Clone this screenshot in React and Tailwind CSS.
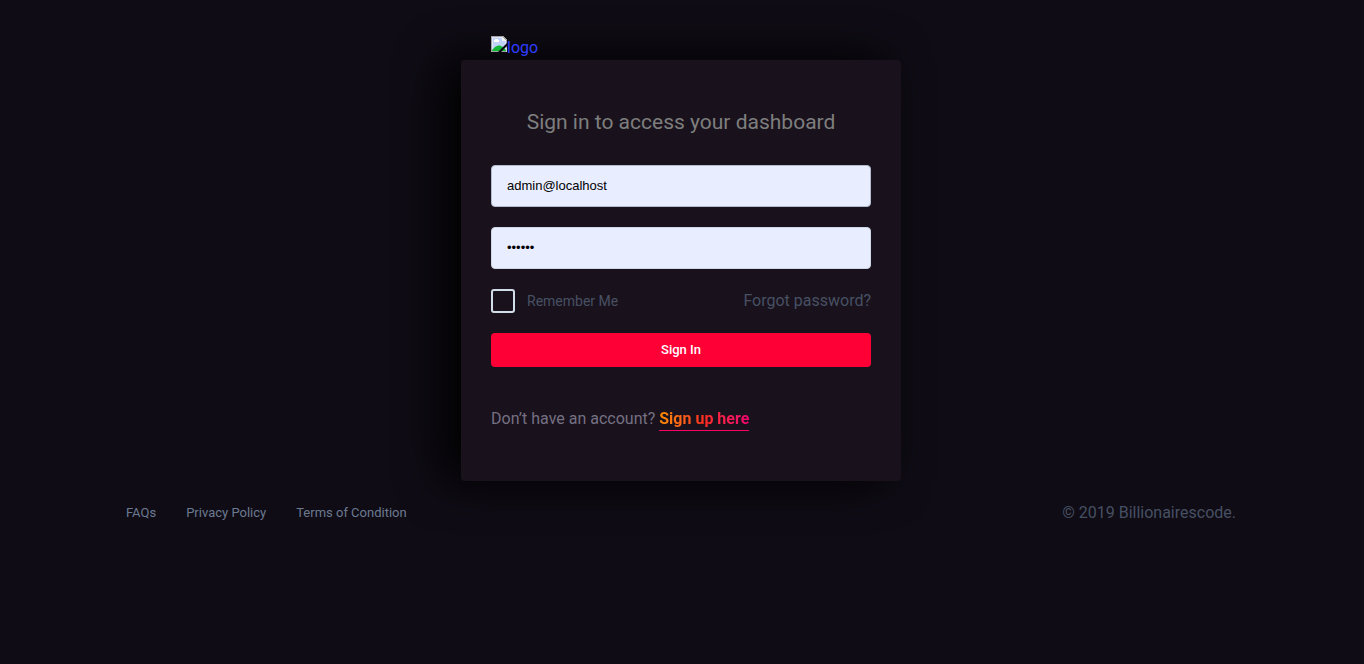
function BrokenImageIcon() {
  return (
    <svg width="16" height="16" viewBox="0 0 16 16" shapeRendering="crispEdges" aria-hidden="true">
      <path d="M0 0H12L16 4V16H0Z" fill="#a3a3a3" />
      <path d="M1 1H11V5H15V15H1Z" fill="#dfe6fb" />
      <path d="M2 2H11V5H14V14H2Z" fill="#c2d3fa" />
      <path d="M11 1L15 5H11Z" fill="#f2f2f2" />
      <path d="M3 4H4V3H7V4H8V6H3Z" fill="#ffffff" />
      <path d="M1 15V14L4 11L7 9.5H9L12 11L15 14V15Z" fill="#12b735" shapeRendering="auto" />
      <path d="M16 7V10L10 16H7Z" fill="#0c0911" shapeRendering="auto" />
      <path d="M16 11V16H15V12Z" fill="#d5d5d5" shapeRendering="auto" />
    </svg>
  );
}

const fieldClass =
  "block h-[42px] w-full rounded border bg-[#e8edff] px-[15px] pb-0.5 font-['Liberation_Sans',Arial,sans-serif] text-[13px] text-black outline-none";

export default function App() {
  return (
    <div className="min-h-screen bg-[#0f0c15] pt-9 pr-0.5 font-[Roboto,sans-serif] text-base text-[#475063]">
      <main className="mx-auto w-full max-w-[440px]">
        <a href="#" className="flex h-6 items-start px-[30px] text-[#2f3cff]">
          <BrokenImageIcon />
          <span className="leading-6">logo</span>
        </a>
        <form
          onSubmit={(e) => e.preventDefault()}
          className="rounded bg-[#19121c] px-[30px] pt-12 pb-[50px] shadow-[-18px_0_46px_0_#000000]"
        >
          <h1 className="mb-7 text-center text-[21px] leading-[29px] text-[#7e7e7e]">
            Sign in to access your dashboard
          </h1>
          <input
            type="email"
            aria-label="Email"
            defaultValue="admin@localhost"
            className={`border-[#b4bdd0] ${fieldClass}`}
          />
          <input
            type="password"
            aria-label="Password"
            defaultValue="secret"
            className={`mt-5 border-[#ccd8e6] ${fieldClass}`}
          />
          <div className="mt-5 flex h-6 items-center justify-between">
            <label className="flex items-center gap-3 text-sm">
              <input
                type="checkbox"
                className="size-6 appearance-none rounded-[3px] border-2 border-[#d2dde9] checked:bg-[#ff0036]"
              />
              Remember Me
            </label>
            <a href="#">Forgot password?</a>
          </div>
          <button
            type="submit"
            className="mt-5 block h-[34px] w-full rounded bg-[#ff0036] text-[13px] font-medium text-white"
          >
            Sign In
          </button>
          <p className="mt-10 leading-6 text-[#757083]">
            Don’t have an account?{" "}
            <a href="#" className="border-b border-b-[#ff0068] pb-0.5 font-bold">
              <span className="bg-linear-to-r from-[#ff8a00] via-[#ff2a20] to-[#f0006e] bg-clip-text text-transparent">
                Sign up here
              </span>
            </a>
          </p>
        </form>
      </main>
      <footer className="mx-auto mt-5 flex w-full max-w-[1140px] flex-wrap items-center justify-between gap-y-2 px-[15px]">
        <nav className="flex gap-[30px] text-[13px] text-[#6c7a91]">
          <a href="#">FAQs</a>
          <a href="#">Privacy Policy</a>
          <a href="#">Terms of Condition</a>
        </nav>
        <p>© 2019 Billionairescode.</p>
      </footer>
    </div>
  );
}
